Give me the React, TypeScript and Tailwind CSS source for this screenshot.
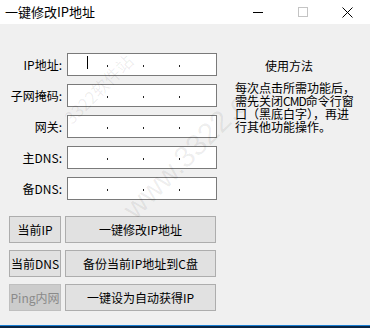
import React from 'react'

const fields = ['IP地址:', '子网掩码:', '网关:', '主DNS:', '备DNS:']

function IpBox({ caret }: { caret?: boolean }) {
  // four octet slots separated by dots, like the win32 IP control
  return (
    <div className="relative flex h-[23px] w-[150px] border border-[#7a7a7a] bg-white">
      <div className="w-[39px]" />
      <span className="mb-[8px] h-[2px] w-[1px] self-end bg-[#222]" />
      <div className="w-[35px]" />
      <span className="mb-[8px] h-[2px] w-[1px] self-end bg-[#222]" />
      <div className="w-[35px]" />
      <span className="mb-[8px] h-[2px] w-[1px] self-end bg-[#222]" />
      <div className="flex-1" />
      {caret && <span className="absolute left-[19px] top-[2px] h-[13px] w-px bg-black" />}
    </div>
  )
}

function Btn({ children, wide, disabled }: { children: React.ReactNode; wide?: boolean; disabled?: boolean }) {
  return (
    <button
      className={
        (wide ? 'w-[151px] ' : 'w-[52px] ') +
        (disabled
          ? 'border-[#bfbfbf] bg-[#cccccc] text-[#8a8a8a] '
          : 'border-[#adadad] bg-[#e1e1e1] text-black ') +
        'flex h-[27px] items-center justify-center whitespace-nowrap border text-[12px] leading-[13px]'
      }
    >
      {children}
    </button>
  )
}

export default function App() {
  return (
    <div className="relative flex h-[328px] w-[370px] flex-col overflow-hidden bg-[#f0f0f0] font-['Noto_Sans_CJK_SC',sans-serif] text-black">
      {/* 标题栏 */}
      <div className="flex h-[24px] items-center bg-white">
        <span className="pl-[5px] text-[13px] leading-[14px]">一键修改IP地址</span>
        <div className="ml-auto flex h-full">
          <div className="flex w-[45px] items-center justify-center">
            <span className="h-px w-[10px] bg-black" />
          </div>
          <div className="flex w-[45px] items-center justify-center">
            <span className="h-[10px] w-[10px] border border-[#c4c4c4]" />
          </div>
          <div className="flex w-[45px] items-center justify-center">
            <svg width="11" height="11" viewBox="0 0 11 11">
              <path d="M0.5 0.5 L10.5 10.5 M10.5 0.5 L0.5 10.5" stroke="#000" strokeWidth="1" />
            </svg>
          </div>
        </div>
      </div>

      {/* 主体 */}
      <div className="flex flex-1 flex-col pt-[29px]">
        <div className="flex">
          <div className="flex flex-col gap-[8px]">
            {fields.map((f, i) => (
              <div key={f} className="flex items-center gap-[5px]">
                <span className="w-[62px] text-right text-[12px] leading-[13px]">{f}</span>
                <IpBox caret={i === 0} />
              </div>
            ))}
          </div>
          <div className="ml-[18px] flex flex-col pt-[6px]">
            <div className="pl-[30px] text-[12px] leading-[13px]">使用方法</div>
            <p className="mt-[9px] whitespace-nowrap text-[12px] leading-[13px]">
              每次点击所需功能后，
              <br />
              需先关闭<span className="tracking-[-1px]">CMD</span>命令行窗
              <br />
              口（黑底白字），再进
              <br />
              行其他功能操作。
            </p>
          </div>
        </div>

        <div className="mt-[16px] flex flex-col gap-[7px] pl-[9px]">
          <div className="flex gap-[4px]">
            <Btn>当前IP</Btn>
            <Btn wide>一键修改IP地址</Btn>
          </div>
          <div className="flex gap-[4px]">
            <Btn>当前DNS</Btn>
            <Btn wide>备份当前IP地址到C盘</Btn>
          </div>
          <div className="flex gap-[4px]">
            <Btn disabled>Ping内网</Btn>
            <Btn wide>一键设为自动获得IP</Btn>
          </div>
        </div>
      </div>

      <div className="h-px bg-[#1a7fd4]" />
      <div className="h-[2px] bg-[#0b2542]" />

      {/* 水印 */}
      <span className="pointer-events-none absolute left-[54px] top-[76px] -rotate-45 whitespace-nowrap text-[17px] text-black/[0.07]">
        3322软件站
      </span>
      <span className="pointer-events-none absolute left-[102px] top-[128px] -rotate-45 whitespace-nowrap font-['Liberation_Sans'] text-[30px] text-black/[0.07]">
        www.3322.cc
      </span>
    </div>
  )
}
